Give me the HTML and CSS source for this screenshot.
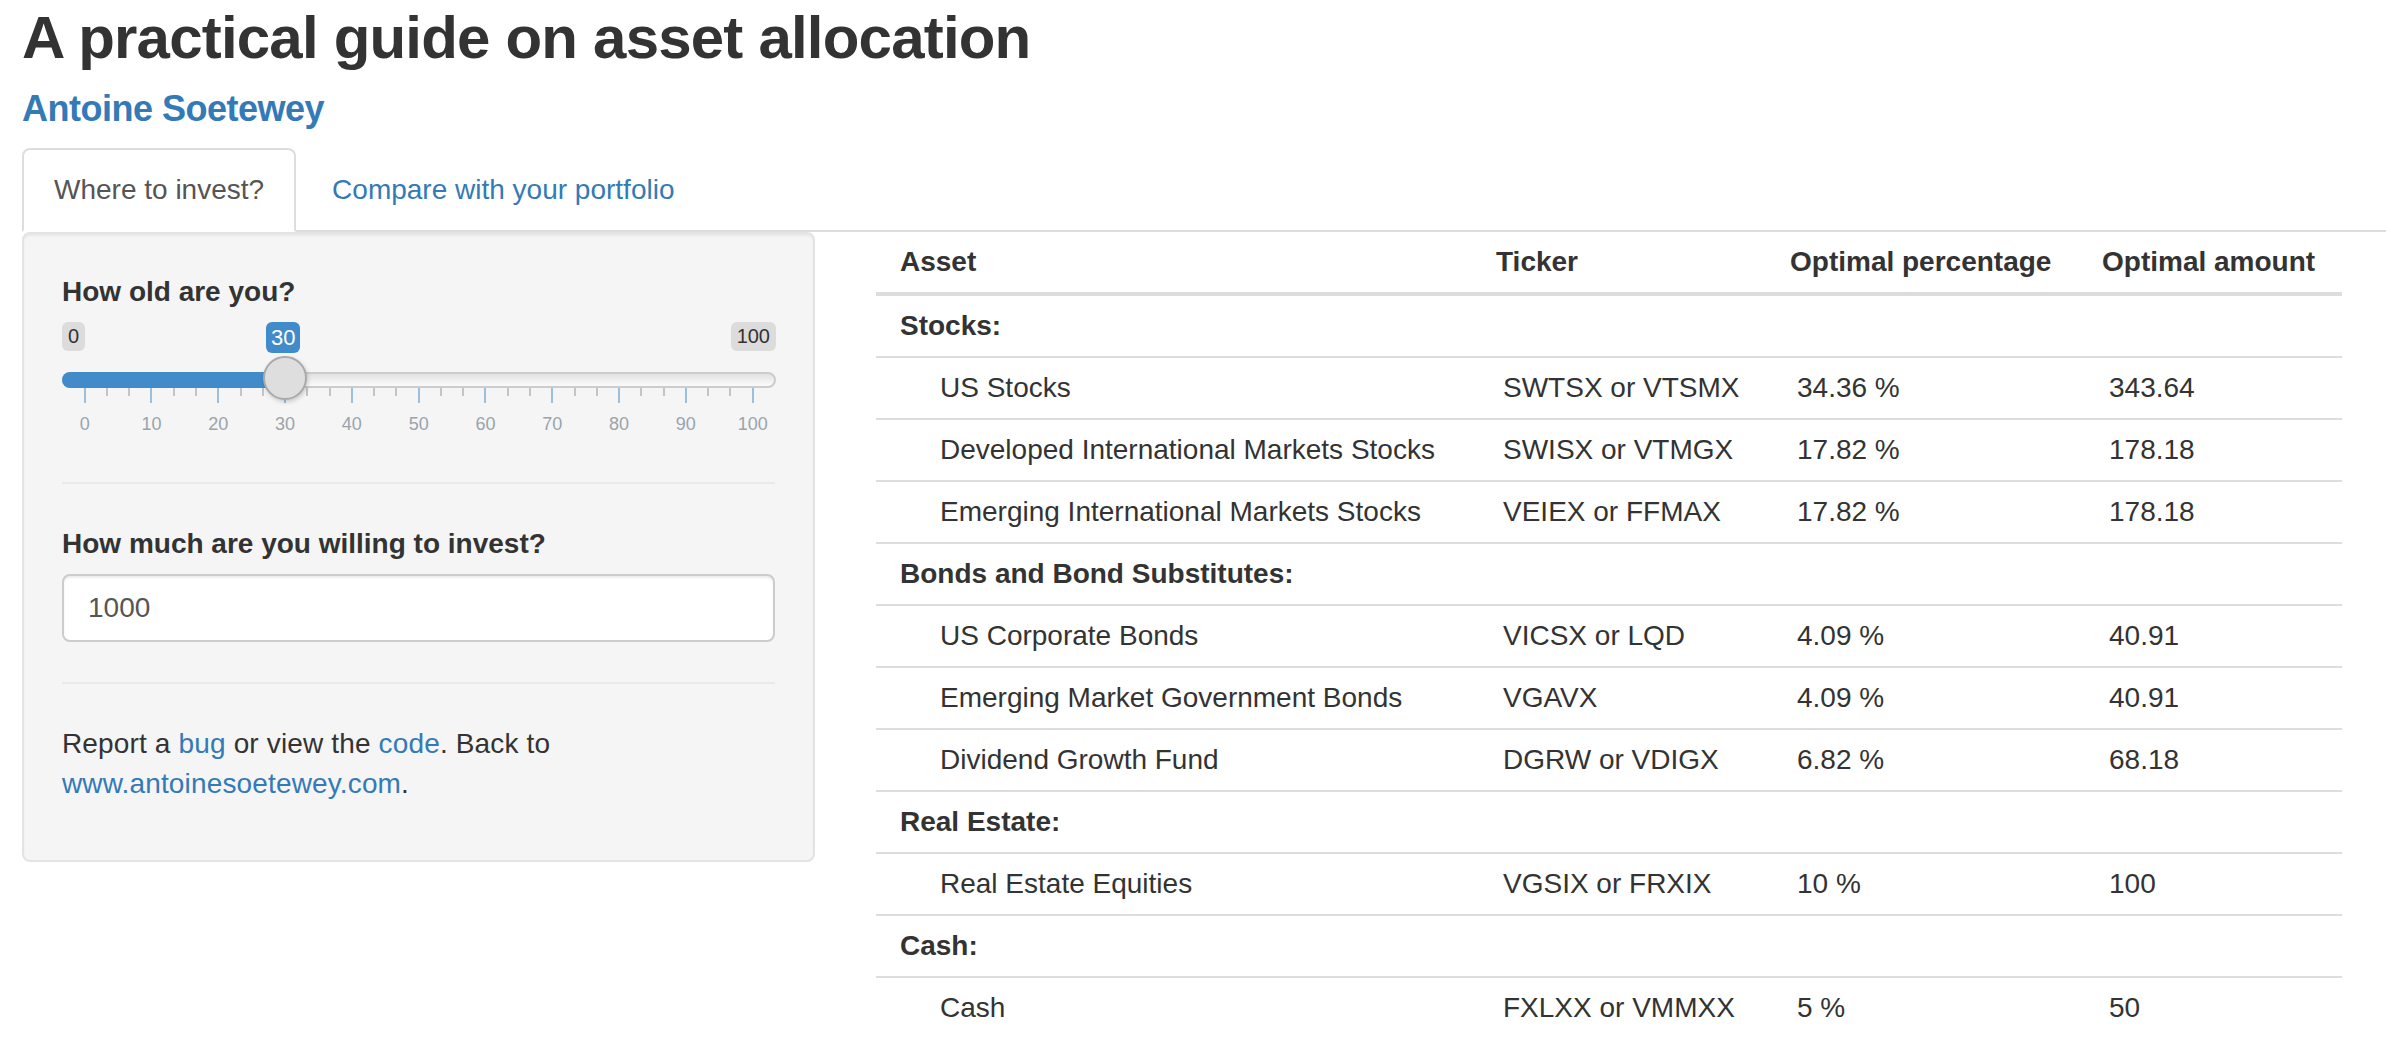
FILE: index.html
```html
<!DOCTYPE html>
<html lang="en">
<head>
<meta charset="utf-8">
<title>A practical guide on asset allocation</title>
<link rel="stylesheet" href="styles.css">
</head>
<body>
<div class="page">
  <h1 class="title">A practical guide on asset allocation</h1>
  <h4 class="author"><a href="#">Antoine Soetewey</a></h4>
  <ul class="tabs">
    <li class="tab active"><a href="#">Where to invest?</a></li>
    <li class="tab"><a href="#">Compare with your portfolio</a></li>
  </ul>
  <div class="row">
    <aside class="well">
      <div class="form-group">
        <label class="control-label">How old are you?</label>
        <div class="irs">
          <span class="irs-min">0</span>
          <span class="irs-max">100</span>
          <span class="irs-from">30</span>
          <span class="irs-line"></span>
          <span class="irs-bar"></span>
          <div class="irs-grid">
            <span class="pol major"></span><span class="pol"></span><span class="pol"></span>
            <span class="pol major"></span><span class="pol"></span><span class="pol"></span>
            <span class="pol major"></span><span class="pol"></span><span class="pol"></span>
            <span class="pol major"></span><span class="pol"></span><span class="pol"></span>
            <span class="pol major"></span><span class="pol"></span><span class="pol"></span>
            <span class="pol major"></span><span class="pol"></span><span class="pol"></span>
            <span class="pol major"></span><span class="pol"></span><span class="pol"></span>
            <span class="pol major"></span><span class="pol"></span><span class="pol"></span>
            <span class="pol major"></span><span class="pol"></span><span class="pol"></span>
            <span class="pol major"></span><span class="pol"></span><span class="pol"></span>
            <span class="pol major"></span>
          </div>
          <div class="irs-grid-text">
            <span>0</span><span>10</span><span>20</span><span>30</span><span>40</span><span>50</span><span>60</span><span>70</span><span>80</span><span>90</span><span>100</span>
          </div>
          <span class="irs-handle"></span>
        </div>
      </div>
      <hr class="divider">
      <div class="form-group">
        <label class="control-label">How much are you willing to invest?</label>
        <input class="form-control" type="number" value="1000">
      </div>
      <hr class="divider">
      <p class="note">Report a <a href="#">bug</a> or view the <a href="#">code</a>. Back to <a href="#">www.antoinesoetewey.com</a>.</p>
    </aside>
    <main class="main">
      <table class="alloc">
        <thead>
          <tr>
            <th class="c1">Asset</th>
            <th class="c2">Ticker</th>
            <th class="c3">Optimal percentage</th>
            <th class="c4">Optimal amount</th>
          </tr>
        </thead>
        <tbody>
          <tr class="group"><td>Stocks:</td><td></td><td></td><td></td></tr>
          <tr><td class="sub">US Stocks</td><td>SWTSX or VTSMX</td><td>34.36 %</td><td>343.64</td></tr>
          <tr><td class="sub">Developed International Markets Stocks</td><td>SWISX or VTMGX</td><td>17.82 %</td><td>178.18</td></tr>
          <tr><td class="sub">Emerging International Markets Stocks</td><td>VEIEX or FFMAX</td><td>17.82 %</td><td>178.18</td></tr>
          <tr class="group"><td>Bonds and Bond Substitutes:</td><td></td><td></td><td></td></tr>
          <tr><td class="sub">US Corporate Bonds</td><td>VICSX or LQD</td><td>4.09 %</td><td>40.91</td></tr>
          <tr><td class="sub">Emerging Market Government Bonds</td><td>VGAVX</td><td>4.09 %</td><td>40.91</td></tr>
          <tr><td class="sub">Dividend Growth Fund</td><td>DGRW or VDIGX</td><td>6.82 %</td><td>68.18</td></tr>
          <tr class="group"><td>Real Estate:</td><td></td><td></td><td></td></tr>
          <tr><td class="sub">Real Estate Equities</td><td>VGSIX or FRXIX</td><td>10 %</td><td>100</td></tr>
          <tr class="group"><td>Cash:</td><td></td><td></td><td></td></tr>
          <tr><td class="sub">Cash</td><td>FXLXX or VMMXX</td><td>5 %</td><td>50</td></tr>
        </tbody>
      </table>
    </main>
  </div>
</div>
</body>
</html>
```
FILE: styles.css
```css
* { box-sizing: border-box; }

html, body {
  margin: 0;
  padding: 0;
  overflow: hidden;
  background: #fff;
}

body {
  font-family: "Liberation Sans", Arial, Helvetica, sans-serif;
  font-size: 28px;
  line-height: 40px;
  color: #333;
}

a { color: #337ab7; text-decoration: none; }

.page {
  width: 2386px;
  padding: 5px 0 0 22px;
}

.title {
  margin: 0;
  font-size: 60px;
  line-height: 66px;
  font-weight: 700;
  color: #333;
  letter-spacing: -0.8px;
}

.author {
  margin: 18px 0 19px;
  font-size: 36px;
  line-height: 40px;
  font-weight: 700;
  letter-spacing: -0.5px;
}

/* tabs */
.tabs {
  list-style: none;
  margin: 0;
  padding: 0;
  display: flex;
  border-bottom: 2px solid #ddd;
  margin-right: -22px;
}
.tab { margin-bottom: -2px; margin-right: 4px; }
.tab a {
  display: block;
  padding: 20px 30px;
  line-height: 40px;
  border: 2px solid transparent;
  border-radius: 8px 8px 0 0;
}
.tab.active a {
  color: #555;
  background: #fff;
  border-color: #ddd;
  border-bottom-color: transparent;
}

/* layout */
.row {
  display: flex;
  align-items: flex-start;
}

.well {
  width: 793px;
  flex: none;
  background: #f5f5f5;
  border: 2px solid #e3e3e3;
  border-radius: 8px;
  box-shadow: inset 0 2px 2px rgba(0,0,0,.05);
  padding: 38px;
}

.main {
  margin-left: 61px;
}

/* form */
.form-group { margin: 0; }
.control-label {
  display: block;
  font-weight: 700;
  margin-bottom: 10px;
}

.divider {
  margin: 40px 0;
  border: 0;
  border-top: 2px solid #eaeaea;
  height: 0;
}

.form-control {
  display: block;
  width: 100%;
  height: 68px;
  padding: 0 24px;
  font-family: inherit;
  font-size: 28px;
  color: #555;
  background: #fff;
  border: 2px solid #ccc;
  border-radius: 8px;
  box-shadow: inset 0 2px 2px rgba(0,0,0,.075);
  -moz-appearance: textfield;
}
.form-control::-webkit-inner-spin-button,
.form-control::-webkit-outer-spin-button { -webkit-appearance: none; margin: 0; }

.note { margin: 0 0 18px; letter-spacing: 0.15px; }

/* slider */
.irs {
  position: relative;
  height: 120px;
}
.irs-min, .irs-max {
  position: absolute;
  top: 0;
  height: 29px;
  padding: 0 6px;
  font-size: 20px;
  line-height: 29px;
  color: #333;
  background: #dcdcdc;
  border-radius: 6px;
}
.irs-min { left: 0; }
.irs-max { right: -1px; }
.irs-from {
  position: absolute;
  top: 0;
  left: 204px;
  height: 31px;
  padding: 0 5px;
  font-size: 22px;
  line-height: 31px;
  color: #fff;
  background: #428bca;
  border-radius: 6px;
}
.irs-line {
  position: absolute;
  left: 0;
  right: -1px;
  top: 50px;
  height: 16px;
  border: 2px solid #ccc;
  border-radius: 16px;
  background: linear-gradient(to bottom, #e2e2e2 0%, #fbfbfb 100%);
}
.irs-bar {
  position: absolute;
  left: 0;
  top: 50px;
  width: 224px;
  height: 16px;
  background: #428bca;
  border-radius: 16px 0 0 16px;
}
.irs-handle {
  position: absolute;
  left: 201px;
  top: 34px;
  width: 44px;
  height: 44px;
  border-radius: 50%;
  background: #dedede;
  border: 2px solid #aaa;
  box-shadow: 1px 2px 4px rgba(0,0,0,.18);
}
.irs-grid {
  position: absolute;
  left: 21.7px;
  width: 670px;
  top: 66px;
  display: flex;
  justify-content: space-between;
  align-items: flex-start;
}
.pol {
  display: block;
  width: 2px;
  height: 8px;
  background: #c4c4c4;
}
.pol.major {
  height: 15px;
  background: #9bc0df;
}
.irs-grid-text {
  position: absolute;
  left: 2.7px;
  width: 708px;
  top: 93px;
  display: flex;
  justify-content: space-between;
  font-size: 18px;
  line-height: 18px;
  color: #99a4ac;
}
.irs-grid-text span {
  width: 40px;
  text-align: center;
}

/* table */
.alloc {
  border-collapse: collapse;
  border-spacing: 0;
}
.alloc th, .alloc td {
  padding: 10px 24px;
  line-height: 40px;
  text-align: left;
  vertical-align: top;
  white-space: nowrap;
}
.alloc th {
  font-weight: 700;
  border-bottom: 4px solid #ddd;
}
.alloc td { border-top: 2px solid #ddd; padding-left: 31px; }
.alloc tbody tr:first-child td { border-top: 0; }
.alloc .group td { font-weight: 700; }
.alloc .group td:first-child { padding-left: 24px; }
.alloc td.sub { padding-left: 64px; }
.alloc .c1 { width: 596px; }
.alloc .c2 { width: 294px; }
.alloc .c3 { width: 312px; }
.alloc .c4 { width: 264px; }
```
